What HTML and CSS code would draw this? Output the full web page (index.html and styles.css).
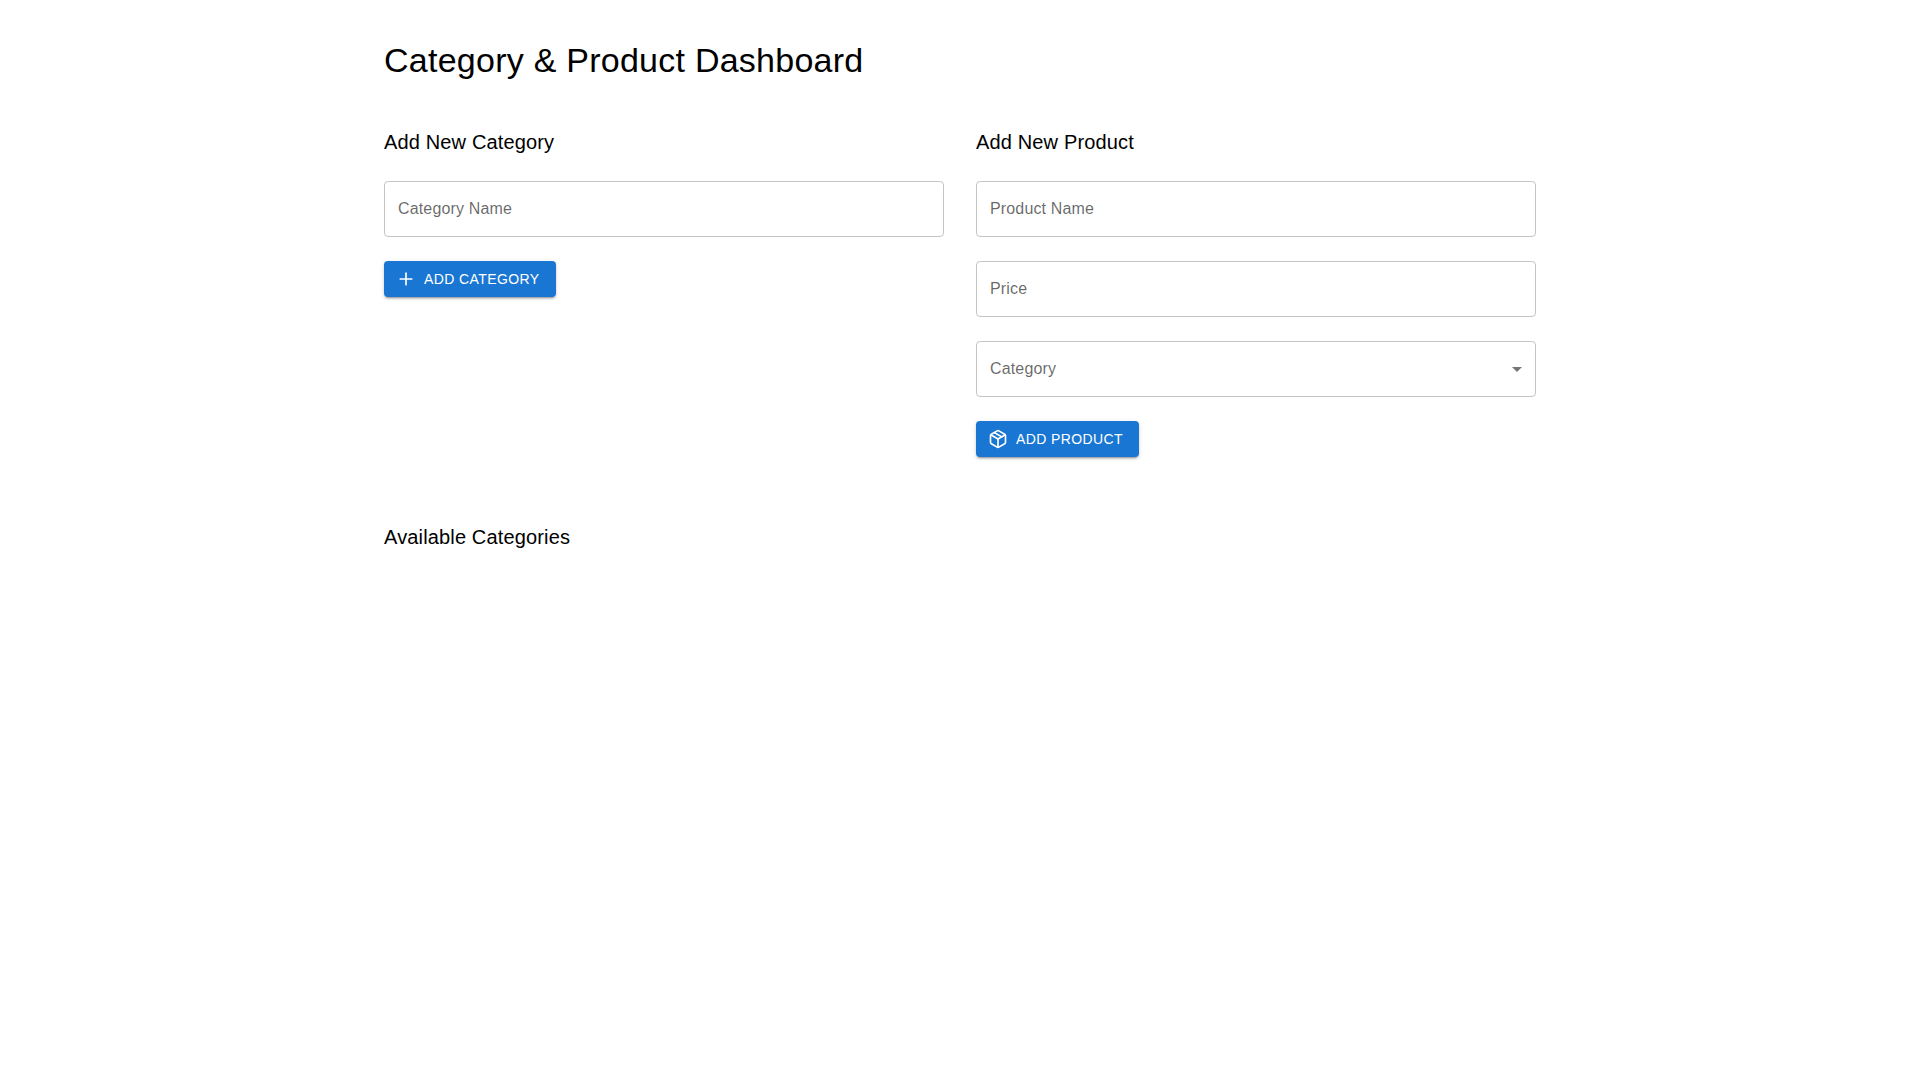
FILE: index.html
```html
<!DOCTYPE html>
<html lang="en">
<head>
  <meta charset="utf-8">
  <meta name="viewport" content="width=device-width, initial-scale=1">
  <title>Category &amp; Product Dashboard</title>
  <link rel="stylesheet" href="styles.css">
</head>
<body>
  <main class="container">
    <h1 class="page-title">Category &amp; Product Dashboard</h1>

    <div class="forms">
      <section>
        <h2 class="section-title">Add New Category</h2>
        <form class="form">
          <div class="field">
            <input class="control" id="category-name" type="text" placeholder=" ">
            <label class="label" for="category-name">Category Name</label>
          </div>
          <button class="button" type="button">
            <svg class="button-icon" viewBox="0 0 24 24" aria-hidden="true">
              <path d="M5 12h14"/>
              <path d="M12 5v14"/>
            </svg>
            Add Category
          </button>
        </form>
      </section>

      <section>
        <h2 class="section-title">Add New Product</h2>
        <form class="form">
          <div class="field">
            <input class="control" id="product-name" type="text" placeholder=" ">
            <label class="label" for="product-name">Product Name</label>
          </div>
          <div class="field">
            <input class="control" id="price" type="number" placeholder=" ">
            <label class="label" for="price">Price</label>
          </div>
          <div class="field">
            <select class="control" id="category">
              <option value=""></option>
            </select>
            <label class="label" for="category">Category</label>
            <svg class="arrow" viewBox="0 0 24 24" aria-hidden="true">
              <path d="m7 10 5 5 5-5z"/>
            </svg>
          </div>
          <button class="button" type="button">
            <svg class="button-icon" viewBox="0 0 24 24" aria-hidden="true">
              <path d="m7.5 4.27 9 5.15"/>
              <path d="M21 8a2 2 0 0 0-1-1.73l-7-4a2 2 0 0 0-2 0l-7 4A2 2 0 0 0 3 8v8a2 2 0 0 0 1 1.73l7 4a2 2 0 0 0 2 0l7-4A2 2 0 0 0 21 16Z"/>
              <path d="m3.3 7 8.7 5 8.7-5"/>
              <path d="M12 22V12"/>
            </svg>
            Add Product
          </button>
        </form>
      </section>
    </div>

    <section>
      <h2 class="section-title">Available Categories</h2>
    </section>
  </main>
</body>
</html>
```
FILE: styles.css
```css
*,
*::before,
*::after {
  box-sizing: border-box;
}

body {
  margin: 0;
  background: #fff;
  color: #000;
  font-family: "Liberation Sans", Arial, sans-serif;
  font-size: 16px;
  line-height: 24px;
}

.container {
  max-width: 1200px;
  margin: 0 auto;
  padding: 40px 24px;
}

.page-title {
  margin: 0 0 46px;
  font-size: 34px;
  font-weight: 400;
  line-height: 40px;
  letter-spacing: 0.00735em;
}

.section-title {
  margin: 0;
  font-size: 20px;
  font-weight: 400;
  line-height: 32px;
  letter-spacing: 0.0075em;
}

.forms {
  display: grid;
  grid-template-columns: repeat(auto-fit, minmax(min(100%, 400px), 1fr));
  gap: 32px;
  margin-bottom: 64px;
}

.form {
  display: flex;
  flex-direction: column;
  align-items: flex-start;
  gap: 24px;
  margin-top: 23px;
}

/* The control, its label and the select arrow share one grid cell. */
.field {
  display: grid;
  align-items: center;
  width: 100%;
}

.field > * {
  grid-area: 1 / 1;
}

.control {
  width: 100%;
  height: 56px;
  padding: 0 14px;
  border: 1px solid rgba(0, 0, 0, 0.23);
  border-radius: 4px;
  background: transparent;
  color: rgba(0, 0, 0, 0.87);
  font: inherit;
  appearance: none;
}

.control:hover {
  border-color: rgba(0, 0, 0, 0.87);
}

.control:focus {
  border-color: #1976d2;
  outline: 1px solid #1976d2;
}

.label {
  justify-self: start;
  margin-left: 14px;
  color: rgba(0, 0, 0, 0.6);
  letter-spacing: 0.00938em;
  pointer-events: none;
}

.control:focus + .label,
.control:not(select, :placeholder-shown) + .label {
  align-self: start;
  margin-top: -8px;
  padding: 0 4px;
  background: #fff;
  font-size: 12px;
  line-height: 16px;
}

.arrow {
  justify-self: end;
  width: 24px;
  height: 24px;
  margin-right: 7px;
  fill: rgba(0, 0, 0, 0.54);
  pointer-events: none;
}

.button {
  display: inline-flex;
  align-items: center;
  gap: 8px;
  padding: 6px 16px 6px 12px;
  border: 0;
  border-radius: 4px;
  background: #1976d2;
  box-shadow:
    0 3px 1px -2px rgba(0, 0, 0, 0.2),
    0 2px 2px 0 rgba(0, 0, 0, 0.14),
    0 1px 5px 0 rgba(0, 0, 0, 0.12);
  color: #fff;
  font: inherit;
  font-size: 14px;
  letter-spacing: 0.02857em;
  text-transform: uppercase;
  cursor: pointer;
}

.button:hover {
  background: #1565c0;
}

.button-icon {
  width: 20px;
  height: 20px;
  fill: none;
  stroke: currentColor;
  stroke-width: 2;
  stroke-linecap: round;
  stroke-linejoin: round;
}
```
